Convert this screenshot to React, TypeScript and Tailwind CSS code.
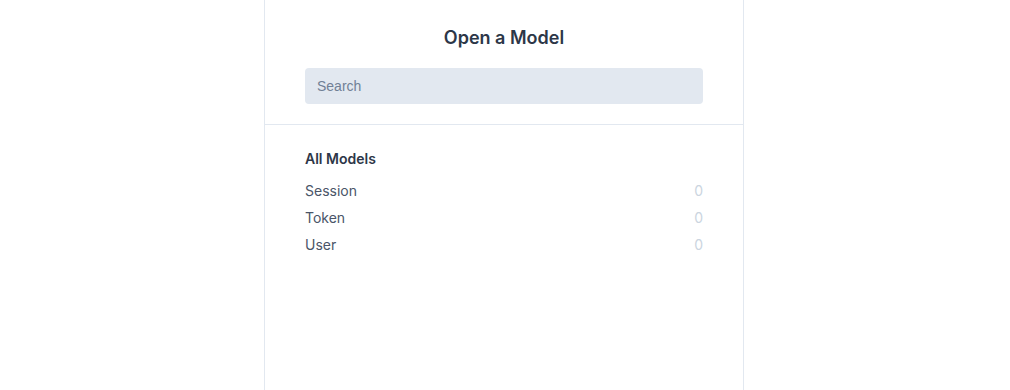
import React from "react";

export default function App() {
  const models = ["Session", "Token", "User"];
  return (
    <div className="min-h-screen w-full bg-white pr-[2px]" style={{ fontFamily: "Inter, 'Noto Sans', sans-serif" }}>
      <div className="mx-auto flex min-h-screen w-[480px] flex-col border-x border-[#e2e8f0]">
        <div className="border-b border-[#e2e8f0] px-10 pb-5 pt-6">
          <h1 className="text-center text-lg font-semibold leading-7 text-[#2d3748]">Open a Model</h1>
          <input
            placeholder="Search"
            className="mt-4 h-9 w-full rounded bg-[#e2e8f0] px-3 text-sm text-[#4a5568] outline-none placeholder:text-[#718096]"
            style={{ fontFamily: "'Liberation Sans', Arial, sans-serif" }}
          />
        </div>
        <div className="px-10 pt-6">
          <div className="text-sm font-semibold leading-5 text-[#2d3748]">All Models</div>
          <div className="mt-2 flex flex-col">
            {models.map((m) => (
              <div key={m} className="flex h-[27px] items-center justify-between text-sm text-[#4a5568]">
                <span>{m}</span>
                <span className="text-[#cbd5e0]">0</span>
              </div>
            ))}
          </div>
        </div>
      </div>
    </div>
  );
}
